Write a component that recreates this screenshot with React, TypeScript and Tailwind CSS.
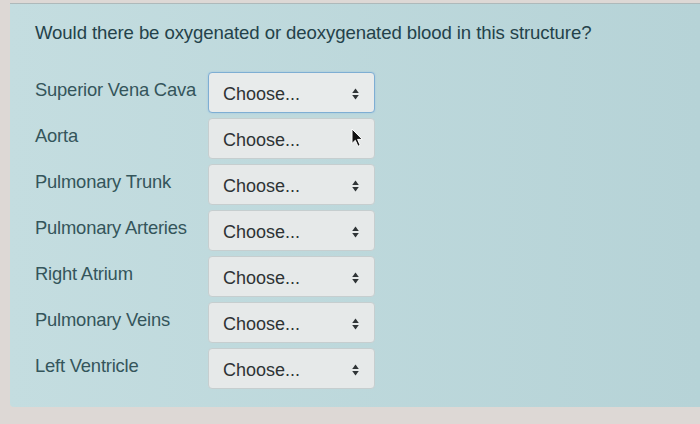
import React from "react";

const rows = [
  "Superior Vena Cava",
  "Aorta",
  "Pulmonary Trunk",
  "Pulmonary Arteries",
  "Right Atrium",
  "Pulmonary Veins",
  "Left Ventricle",
];

function UpDown() {
  return (
    <svg width="7" height="12" viewBox="0 0 7 12">
      <path d="M3.5 0.5 L6.8 5 L0.2 5 Z" fill="#2f3436" />
      <path d="M3.5 11.5 L6.8 7 L0.2 7 Z" fill="#2f3436" />
    </svg>
  );
}

function Cursor() {
  return (
    <svg width="13" height="20" viewBox="0 0 13 20">
      <path
        d="M1 1 L1 15.5 L4.3 12.3 L7 18.3 L9.2 17.3 L6.6 11.4 L11.3 11.4 Z"
        fill="#111"
        stroke="#fff"
        strokeWidth="1"
        strokeLinejoin="round"
      />
    </svg>
  );
}

export default function App() {
  return (
    <div
      className="w-[700px] h-[424px] bg-[#ddd8d5] pt-[3px] pl-[10px] overflow-hidden"
      style={{ fontFamily: '"Liberation Sans", Arial, sans-serif' }}
    >
      <div className="h-[404px] bg-gradient-to-r from-[#c4dde0] to-[#b6d3d7] rounded-bl-[4px] pt-[18px] pl-[25px] border-t border-[#aeb9ba]">
        <div className="text-[18.6px] leading-[22px] text-[#24424a] tracking-[-0.1px]">
          Would there be oxygenated or deoxygenated blood in this structure?
        </div>
        <div className="mt-[28px] flex flex-col gap-[5px]">
          {rows.map((r, i) => (
            <div key={r} className="flex items-center">
              <div className="w-[173px] text-[18.4px] text-[#34555b] mb-[6px] tracking-[-0.2px] whitespace-nowrap">
                {r}
              </div>
              <div
                className={
                  i === 0
                    ? "w-[167px] h-[41px] rounded-[4px] bg-[#e8ebeb] border border-[#7eaed3] shadow-[0_0_2px_#9cc3e0] flex items-center justify-between pl-[14px] pr-[15px]"
                    : "w-[167px] h-[41px] rounded-[4px] bg-[#e6e9e9] border border-[#c6cecf] flex items-center justify-between pl-[14px] pr-[15px]"
                }
              >
                <span className="text-[18px] text-[#2e3335] mt-[3px]">Choose...</span>
                {i === 1 ? (
                  <span className="-mr-[5px] -mt-[2px]">
                    <Cursor />
                  </span>
                ) : (
                  <span className="mt-[3px]">
                    <UpDown />
                  </span>
                )}
              </div>
            </div>
          ))}
        </div>
      </div>
    </div>
  );
}
